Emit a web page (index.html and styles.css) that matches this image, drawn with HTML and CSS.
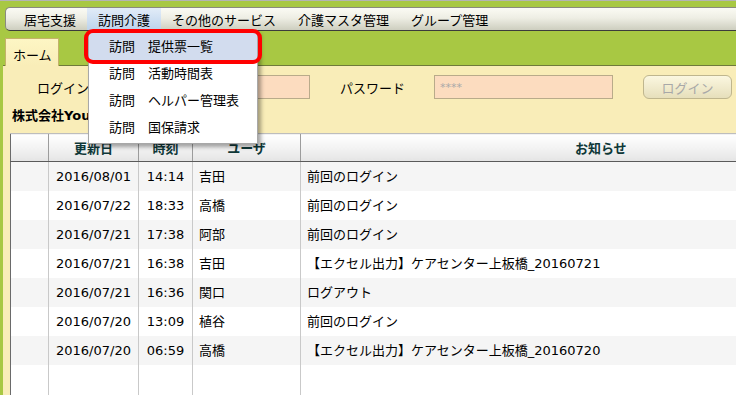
FILE: index.html
```html
<!DOCTYPE html>
<html lang="ja">
<head>
<meta charset="UTF-8">
<title>ホーム</title>
<link rel="stylesheet" href="styles.css">
</head>
<body>

<div class="topline"></div>

<!-- Main menu -->
<nav class="menubar">
  <span class="menu-item">居宅支援</span>
  <span class="menu-item active">訪問介護</span>
  <span class="menu-item">その他のサービス</span>
  <span class="menu-item">介護マスタ管理</span>
  <span class="menu-item">グループ管理</span>
</nav>

<div class="tabbar">
  <div class="tab">ホーム</div>
</div>

<div class="panel">
  <div class="login-row">
    <span class="login-label id-label">ログインID</span>
    <input class="login-input id-input" type="text">
    <span class="login-label pw-label">パスワード</span>
    <input class="login-input pw-input" type="text" value="****">
    <button class="login-btn">ログイン</button>
  </div>

  <div class="company">株式会社YouCare</div>

  <div class="grid">
    <table class="news">
      <colgroup>
        <col class="c-mark"><col class="c-date"><col class="c-time"><col class="c-user"><col class="c-msg">
      </colgroup>
      <thead>
        <tr><th></th><th>更新日</th><th>時刻</th><th>ユーザ</th><th>お知らせ</th></tr>
      </thead>
      <tbody>
        <tr><td></td><td class="center">2016/08/01</td><td class="center">14:14</td><td>吉田</td><td>前回のログイン</td></tr>
        <tr><td></td><td class="center">2016/07/22</td><td class="center">18:33</td><td>高橋</td><td>前回のログイン</td></tr>
        <tr><td></td><td class="center">2016/07/21</td><td class="center">17:38</td><td>阿部</td><td>前回のログイン</td></tr>
        <tr><td></td><td class="center">2016/07/21</td><td class="center">16:38</td><td>吉田</td><td>【エクセル出力】ケアセンター上板橋_20160721</td></tr>
        <tr><td></td><td class="center">2016/07/21</td><td class="center">16:36</td><td>関口</td><td>ログアウト</td></tr>
        <tr><td></td><td class="center">2016/07/20</td><td class="center">13:09</td><td>植谷</td><td>前回のログイン</td></tr>
        <tr><td></td><td class="center">2016/07/20</td><td class="center">06:59</td><td>高橋</td><td>【エクセル出力】ケアセンター上板橋_20160720</td></tr>
        <tr class="blank"><td></td><td></td><td></td><td></td><td></td></tr>
        <tr class="blank"><td></td><td></td><td></td><td></td><td></td></tr>
      </tbody>
    </table>
  </div>
</div>

<!-- Dropdown of 訪問介護 -->
<ul class="dropdown">
  <li class="selected">訪問　提供票一覧</li>
  <li>訪問　活動時間表</li>
  <li>訪問　ヘルパー管理表</li>
  <li>訪問　国保請求</li>
</ul>
<div class="highlight-frame"></div>

</body>
</html>
```

FILE: styles.css
```css
* { margin: 0; padding: 0; box-sizing: border-box; }
html, body { height: 100%; overflow: hidden; }
body { display: flex; flex-direction: column; background-color: #a8c843; font-family: "DejaVu Sans", "Noto Sans CJK JP", sans-serif; font-size: 13px; color: #000; }

.topline { flex: none; height: 1px; background-color: #b4b4b4; }

.menubar { flex: none; display: flex; margin: 6px 0 0 5px; height: 24px; padding-left: 7px; background: linear-gradient(#fbfbf4, #eeeee4 45%, #cdcebf); border: 1px solid #8a8a80; border-right: none; border-bottom: 1px solid #3c3c3c; border-radius: 5px 0 0 5px; }
.menu-item { display: flex; align-items: center; padding: 0 11px; height: 22px; white-space: nowrap; }
.menu-item.active { background: linear-gradient(#e2ecf8, #bcd3ec); }

.tabbar { flex: none; display: flex; align-items: flex-end; height: 34px; padding-left: 5px; }
.tab { position: relative; top: 1px; width: 54px; height: 28px; padding: 6px 0 0 7px; background: linear-gradient(#fdf6c4, #f9edb8); border: 1px solid #c4b26a; border-bottom: none; white-space: nowrap; }

.panel { flex: 1; min-height: 0; overflow: hidden; margin-left: 3px; padding-left: 7px; background-color: #f9edb8; border-top: 1px solid #6f7a3a; }

.login-row { display: flex; align-items: center; height: 24px; margin-top: 9px; padding-left: 27px; }
.login-label { white-space: nowrap; }
.id-label { width: 110px; }
.pw-label { width: 94px; margin-left: 30px; }
.login-input { height: 24px; background-color: #fcdcbf; border: 1px solid #b9ab8a; font-family: "DejaVu Sans", sans-serif; font-size: 11px; color: #a9a9a9; padding-left: 5px; outline: none; }
.id-input { width: 163px; }
.pw-input { width: 179px; }
.login-btn { width: 89px; height: 24px; margin-left: 30px; background: linear-gradient(#fbf7e0, #e6dfbb); border: 1px solid #bfb68e; border-radius: 6px; color: #a8a8a8; font-family: "Noto Sans CJK JP", sans-serif; font-size: 13px; }

.company { margin-top: 7px; height: 20px; line-height: 20px; padding-left: 2px; font-weight: bold; white-space: nowrap; }

.grid { margin-top: 7px; }
.news { width: 890px; border-collapse: collapse; table-layout: fixed; border-left: 1px solid #6a6a6a; background-color: #fff; }
.c-mark { width: 38px; }
.c-date { width: 90px; }
.c-time { width: 54px; }
.c-user { width: 108px; }
.c-msg { width: 600px; }
.news th { height: 28px; padding: 0; font-weight: bold; color: #0f3838; background: linear-gradient(#ffffff, #f3f3f3 50%, #e4e4e4); border-top: 1px solid #bdbdbd; border-bottom: 1px solid #5a5a5a; border-left: 1px solid #9c9c9c; text-align: center; white-space: nowrap; }
.news th:first-child { border-left: none; }
.news tbody tr { height: 29px; }
.news td { height: 29px; padding: 0 6px; line-height: 29px; border-left: 1px solid #c9c9c9; white-space: nowrap; overflow: hidden; }
.news td:first-child { border-left: none; }
.news td.center { text-align: center; padding: 0; }
.news tbody tr:nth-child(odd) { background-color: #f5f5f5; }
.news tbody tr.blank { background-color: #fff; }

.dropdown { position: absolute; left: 88px; top: 31px; width: 170px; padding: 1px 0 2px; list-style: none; background-color: #fff; border: 1px solid #a8a8a8; box-shadow: 3px 3px 4px rgba(0,0,0,.35); }
.dropdown li { height: 27px; line-height: 27px; padding-left: 20px; white-space: nowrap; }
.dropdown li.selected { background-color: #d2dcee; }

.highlight-frame { position: absolute; left: 84px; top: 29px; width: 178px; height: 35px; border: 4px solid #ff0000; border-radius: 9px; }
```
